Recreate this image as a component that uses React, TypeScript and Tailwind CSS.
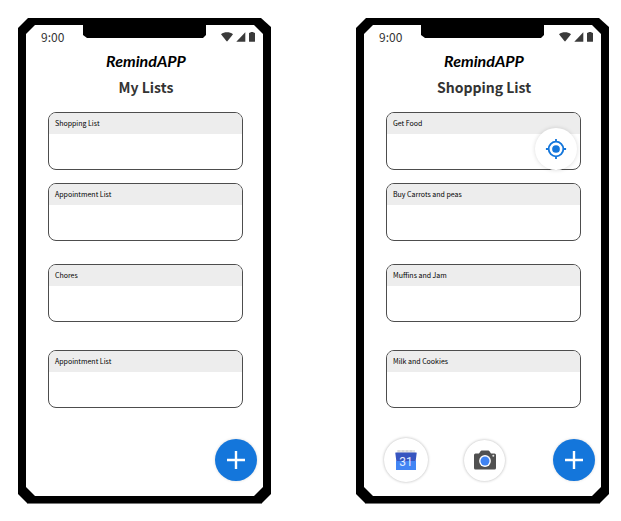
import type { ReactNode } from "react";

const sourceSans = "font-['Noto_Sans_CJK_SC','Noto_Sans',sans-serif]";

function WifiIcon() {
  return (
    <svg viewBox="0 0 12 10" className="h-[10px] w-3" fill="#3a3a3a" aria-hidden="true">
      <path d="M0 2.2C1.7.9 3.8.3 6 .3S10.3.9 12 2.2L6.6 9.1Q6 9.8 5.4 9.1z" />
    </svg>
  );
}

function SignalIcon() {
  return (
    <svg viewBox="0 0 10 10" className="size-[10px]" fill="#3a3a3a" aria-hidden="true">
      <path d="M.3 9.7 9.3.3v9.4z" />
    </svg>
  );
}

function BatteryIcon() {
  return (
    <svg viewBox="0 0 6 10" className="h-[10px] w-[6px]" fill="#3a3a3a" aria-hidden="true">
      <path d="M1.5 0h3v.8h1q.5 0 .5.5v8q0 .5-.5.5h-5q-.5 0-.5-.5v-8q0-.5.5-.5h1z" />
    </svg>
  );
}

function LocateIcon() {
  return (
    <svg viewBox="0 0 24 24" className="size-[22px]" aria-hidden="true">
      <circle cx="12" cy="12" r="8" fill="none" stroke="#1476db" strokeWidth="2" />
      <circle cx="12" cy="12" r="4.2" fill="#1476db" />
      <path d="M12 1v3M12 20v3M1 12h3M20 12h3" stroke="#1476db" strokeWidth="2" />
    </svg>
  );
}

function CalendarIcon() {
  return (
    <svg viewBox="0 0 22 22" className="size-[22px]" aria-hidden="true">
      <path d="M2 1h18v3H2z" fill="#e4e4e4" />
      <path d="M4 1v2M8 1v2M12 1v2M16 1v2" stroke="#c9c9c9" />
      <path d="M1 12h20v8.5q0 .5-.5.5h-19q-.5 0-.5-.5z" fill="#4285f4" />
      <path d="M.8 3.500h20.400q.6 0 .5.600L20.700 12H1.300L.3 4.100Q.2 3.500.8 3.500z" fill="#3755c0" />
      <text
        x="11"
        y="16.5"
        textAnchor="middle"
        fontSize="12"
        fill="#e3ecff"
        fontFamily="Roboto, sans-serif"
      >
        31
      </text>
    </svg>
  );
}

function CameraIcon() {
  return (
    <svg viewBox="0 0 22 20" className="h-5 w-[22px]" aria-hidden="true">
      <path
        d="M7.5.5h7q.5 0 .8.4L17 3.5h3.500Q22 3.500 22 5v13q0 1.500-1.500 1.500h-19Q0 19.500 0 18V5q0-1.500 1.500-1.500H5L6.700.9q.3-.4.8-.4z"
        fill="#505050"
      />
      <circle cx="11" cy="11" r="5.9" fill="#fff" />
      <circle cx="11" cy="11" r="4.5" fill="#3f83f2" />
      <circle cx="19.3" cy="5.8" r="1" fill="#e6e6e6" />
    </svg>
  );
}

function AddButton() {
  return (
    <button
      type="button"
      aria-label="Add"
      className="ml-auto flex size-[42px] items-center justify-center rounded-full bg-[#1476db] shadow-[0_0_3px_rgba(0,0,0,0.15)]"
    >
      <svg viewBox="0 0 20 20" className="size-5" aria-hidden="true">
        <path d="M10 1v18M1 10h18" stroke="#fff" strokeWidth="2.4" />
      </svg>
    </button>
  );
}

function Card({ title, action, className = "" }: { title: string; action?: ReactNode; className?: string }) {
  return (
    <li className={`relative ${className}`}>
      <div className="h-[58px] overflow-hidden rounded-[8px] border border-[#4d4d4d] bg-white">
        <h3 className="h-[21px] bg-[#ededed] pl-[6px] text-[7px] leading-[20px] text-black">{title}</h3>
      </div>
      {action}
    </li>
  );
}

function Phone({ heading, children, actions }: { heading: string; children: ReactNode; actions: ReactNode }) {
  return (
    <section className="border-b border-[#777] bg-black px-2 pt-[7px] pb-[7px] [clip-path:polygon(10px_0,calc(100%-10px)_0,100%_9px,100%_calc(100%-10px),calc(100%-10px)_100%,10px_100%,0_calc(100%-10px),0_10px)]">
      <div className="bg-white pb-[14px] [clip-path:polygon(9px_0,calc(100%-9px)_0,100%_9px,100%_calc(100%-9px),calc(100%-9px)_100%,9px_100%,0_calc(100%-9px),0_9px)]">
        <div className="grid h-[23px] grid-cols-[1fr_123px_1fr]">
          <span className="pl-[15px] text-[12px] leading-[23px] text-[#333]">9:00</span>
          <div className="h-[13px] bg-black [clip-path:polygon(0_0,100%_0,100%_10px,calc(100%-3px)_100%,4px_100%,0_10px)]" />
          <div className="flex items-center justify-end gap-[3px] pr-2">
            <WifiIcon />
            <SignalIcon />
            <BatteryIcon />
          </div>
        </div>
        <h1 className="pl-[3px] text-center font-['Lato',sans-serif] text-[16px] leading-[26px] font-bold text-black italic">
          RemindAPP
        </h1>
        <h2 className="pl-[3px] text-center text-[14px] leading-[27px] font-bold text-[#333]">{heading}</h2>
        <ul className="mt-[11px] mr-5 ml-[22px]">{children}</ul>
        <div className="mt-[30px] flex h-[44px] items-center gap-9 pr-[6px] pl-5">{actions}</div>
      </div>
    </section>
  );
}

export default function App() {
  return (
    <main
      className={`grid min-h-screen grid-cols-2 items-start gap-[85px] bg-white pt-[18px] pr-3 pl-[18px] ${sourceSans}`}
    >
      <Phone heading="My Lists" actions={<AddButton />}>
        <Card title="Shopping List" />
        <Card title="Appointment List" className="mt-[13px]" />
        <Card title="Chores" className="mt-[23px]" />
        <Card title="Appointment List" className="mt-7" />
      </Phone>
      <Phone
        heading="Shopping List"
        actions={
          <>
            <button
              type="button"
              aria-label="Calendar"
              className="flex size-[44px] items-center justify-center rounded-full bg-white shadow-[0_0_3px_rgba(0,0,0,0.3)]"
            >
              <CalendarIcon />
            </button>
            <button
              type="button"
              aria-label="Camera"
              className="flex size-[41px] items-center justify-center rounded-full bg-white shadow-[0_0_3px_rgba(0,0,0,0.3)]"
            >
              <CameraIcon />
            </button>
            <AddButton />
          </>
        }
      >
        <Card
          title="Get Food"
          action={
            <button
              type="button"
              aria-label="Use my location"
              className="absolute right-1 bottom-0 flex size-[42px] items-center justify-center rounded-full bg-white shadow-[0_0_4px_rgba(0,0,0,0.15)]"
            >
              <LocateIcon />
            </button>
          }
        />
        <Card title="Buy Carrots and peas" className="mt-[13px]" />
        <Card title="Muffins and Jam" className="mt-[23px]" />
        <Card title="Milk and Cookies" className="mt-7" />
      </Phone>
    </main>
  );
}
